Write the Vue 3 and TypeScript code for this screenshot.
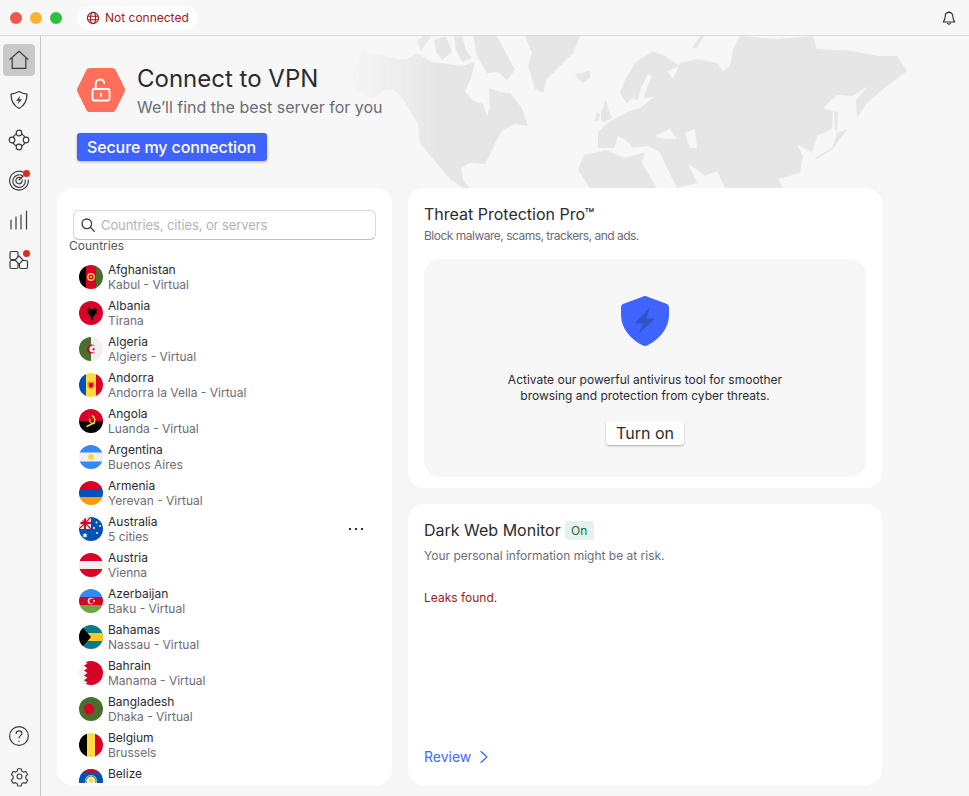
<script setup lang="ts">
interface ICountry {
  code: string
  name: string
  sub: string
  more?: boolean
}

const countries: ICountry[] = [
  { code: 'af', name: 'Afghanistan', sub: 'Kabul - Virtual' },
  { code: 'al', name: 'Albania', sub: 'Tirana' },
  { code: 'dz', name: 'Algeria', sub: 'Algiers - Virtual' },
  { code: 'ad', name: 'Andorra', sub: 'Andorra la Vella - Virtual' },
  { code: 'ao', name: 'Angola', sub: 'Luanda - Virtual' },
  { code: 'ar', name: 'Argentina', sub: 'Buenos Aires' },
  { code: 'am', name: 'Armenia', sub: 'Yerevan - Virtual' },
  { code: 'au', name: 'Australia', sub: '5 cities', more: true },
  { code: 'at', name: 'Austria', sub: 'Vienna' },
  { code: 'az', name: 'Azerbaijan', sub: 'Baku - Virtual' },
  { code: 'bs', name: 'Bahamas', sub: 'Nassau - Virtual' },
  { code: 'bh', name: 'Bahrain', sub: 'Manama - Virtual' },
  { code: 'bd', name: 'Bangladesh', sub: 'Dhaka - Virtual' },
  { code: 'be', name: 'Belgium', sub: 'Brussels' },
  { code: 'bz', name: 'Belize', sub: 'Belmopan - Virtual' },
]
</script>

<template>
  <div class="app">
    <header class="titlebar">
      <div class="lights">
        <span class="light light--red"></span>
        <span class="light light--yellow"></span>
        <span class="light light--green"></span>
      </div>
      <div class="status">
        <svg width="14" height="14" viewBox="0 0 14 14" fill="none" stroke="#9b1c17" stroke-width="1.1">
          <circle cx="7" cy="7" r="5.6" />
          <ellipse cx="7" cy="7" rx="2.6" ry="5.6" />
          <path d="M1.6 5.2h10.8M1.6 8.8h10.8" />
        </svg>
        <span>Not connected</span>
      </div>
      <svg class="bell" width="16" height="16" viewBox="0 0 16 16" fill="none" stroke="#2b2b30" stroke-width="1.1">
        <path d="M8 1.2v1.2M8 2.4c-2.6 0-3.9 1.900-3.900 4.300 0 2.600-.6 3.800-1.900 5.300h11.600c-1.300-1.500-1.900-2.700-1.900-5.300 0-2.400-1.300-4.300-3.900-4.300z" stroke-linejoin="round" />
        <path d="M6.400 13.600c.4.700 2.800.700 3.200 0" stroke-linecap="round" />
      </svg>
    </header>

    <div class="window">
      <nav class="sidebar">
        <div class="nav-group">
          <button class="nav-btn nav-btn--active" type="button">
            <svg width="24" height="24" viewBox="0 0 24 24" fill="none" stroke="#3c3c42" stroke-width="1.2" stroke-linejoin="round">
              <path d="M2.600 11.600 12 3.200l9.400 8.400M5.200 9.600V20.400h13.600V9.600" />
            </svg>
          </button>
          <button class="nav-btn" type="button">
            <svg width="24" height="24" viewBox="0 0 24 24" fill="none" stroke="#3c3c42" stroke-width="1.3" stroke-linejoin="round">
              <path d="M12 3.500c2.700 1.500 5.200 2.300 8 2.600 0 6.800-2.400 11.600-8 14.400-5.600-2.800-8-7.600-8-14.400 2.800-.3 5.300-1.100 8-2.600z" />
              <path d="M13.200 7.800 9 12.800h2.800l-1 3.400 4.200-5h-2.800z" fill="#3c3c42" stroke="none" />
            </svg>
          </button>
          <button class="nav-btn" type="button">
            <svg width="24" height="24" viewBox="0 0 24 24" fill="none" stroke="#3c3c42" stroke-width="1.2">
              <circle cx="12" cy="12" r="6.500" />
              <circle cx="12" cy="5" r="2.800" fill="#f7f7f7" />
              <circle cx="12" cy="19" r="2.800" fill="#f7f7f7" />
              <circle cx="5" cy="12" r="2.800" fill="#f7f7f7" />
              <circle cx="19" cy="12" r="2.800" fill="#f7f7f7" />
            </svg>
          </button>
          <button class="nav-btn" type="button">
            <svg width="24" height="24" viewBox="0 0 24 24" fill="none" stroke="#3c3c42" stroke-width="1.2" stroke-linecap="round">
              <path d="M18 5.400A9.400 9.400 0 1 0 21.400 12" />
              <path d="M15.800 8A6.300 6.300 0 1 0 18.300 12" />
              <path d="M14.200 10.200A3.200 3.200 0 1 0 15.200 12" />
              <path d="M12 12l4-4" />
            </svg>
            <span class="dot"></span>
          </button>
          <button class="nav-btn" type="button">
            <svg width="24" height="24" viewBox="0 0 24 24" fill="none" stroke="#3c3c42" stroke-width="1.2" stroke-linecap="round">
              <path d="M4 21v-9M9 21V9M14 21V7M19.500 21V3" />
            </svg>
          </button>
          <button class="nav-btn" type="button">
            <svg width="24" height="24" viewBox="0 0 24 24" fill="none" stroke="#3c3c42" stroke-width="1.2">
              <rect x="3" y="3.500" width="8" height="8" rx="1.500" />
              <rect x="3" y="12.500" width="8" height="8" rx="1.500" />
              <rect x="12.500" y="12.500" width="8" height="8" rx="1.500" />
              <path d="M12 7.800 16 12 12 16.200 8 12z" fill="#f7f7f7" />
            </svg>
            <span class="dot"></span>
          </button>
        </div>
        <div class="nav-group">
          <button class="nav-btn" type="button">
            <svg width="24" height="24" viewBox="0 0 24 24" fill="none" stroke="#3c3c42" stroke-width="1.2" stroke-linecap="round">
              <circle cx="12" cy="12" r="9.400" />
              <path d="M9.200 9.600c0-1.700 1.300-2.800 2.900-2.800s2.800 1.100 2.800 2.500c0 2.300-2.900 2.300-2.900 4.700" />
              <path d="M12 17v.4" />
            </svg>
          </button>
          <button class="nav-btn" type="button">
            <svg width="21" height="21" viewBox="0 0 24 24" fill="none" stroke="#3c3c42" stroke-width="1.3" stroke-linejoin="round">
              <path d="M10 3.200h4l.7 2.700 1.900 1.100 2.700-.8 2 3.500-2 1.900v2.800l2 1.900-2 3.500-2.700-.8-1.900 1.100-.7 2.700h-4l-.7-2.700-1.900-1.100-2.700.8-2-3.500 2-1.900v-2.800l-2-1.900 2-3.500 2.700.8 1.900-1.100z" />
              <circle cx="12" cy="12" r="2.800" />
            </svg>
          </button>
        </div>
      </nav>

      <main class="main">
        <svg class="map" width="928" height="160" viewBox="41 36 928 160" aria-hidden="true">
          <g fill="#e6e6e6">
            <path d="M353 73 362 52 385 56 403 60 418 54 432 62 448 64 462 66 475 62 471 78 465 91 472 100 483 104 487 116 490 108 489 88 500 92 510 93 522 108 528 126 515 124 503 130 497 139 492 150 485 164 470 163 461 168 463 180 470 188 463 188 450 179 433 159 420 143 418 124 403 99 393 89 383 91 373 98 357 93z" />
            <path d="M417 41 424 36 432 36 424 46 421 51zM434 40 446 36 452 52 442 60 436 52zM454 36 462 36 466 50 472 58 462 62 456 50zM473 36 497 36 515 70 507 80 498 72 487 73 477 56z" />
            <path d="M525 36 580 36 573 53 557 69 547 79 543 93 535 89 528 66 532 53z" />
            <path d="M575 74 590 71 590 78 583 83 578 79z" />
            <path d="M601 113 606 99 608 108 612 118 604 122 601 120z" />
            <path d="M594 122 597 112 600 114 599 120z" />
            <path d="M598 132 607 123 627 112 640 108 654 97 644 98 646 90 652 76 648 74 641 88 638 100 632 98 627 103 620 93 625 80 636 62 653 51 665 56 680 66 667 71 673 79 680 63 697 59 717 63 723 71 730 66 733 49 740 36 777 39 813 36 817 49 853 51 877 56 897 56 907 71 887 86 867 103 857 118 856 100 868 86 853 96 837 95 823 108 833 111 832 129 817 136 812 153 797 144 803 156 800 173 778 179 783 188 725 188 717 171 705 176 688 163 697 183 677 188 665 164 660 152 648 146 633 148 626 140 618 136 614 148 598 148z" />
            <path d="M692 48 700 36 704 36 697 48z" />
            <path d="M815 158 832 148 837 133 847 129 833 149 817 159z" />
            <path d="M834 111 838 112 837 131 835 130z" />
            <path d="M590 188 578 170 584 155 606 150 625 158 645 152 642 163 657 188z" />
            <path d="M882 270 885 275 891 274 887 281 882 285z" />
          </g>
          <g fill="#f7f7f7">
            <path d="M655 136 670 129 677 139 663 139z" />
            <path d="M685 133 695 129 697 148 690 148z" />
          </g>
        </svg>

        <section class="hero">
          <div class="hero__top">
            <svg class="hero__icon" width="48" height="44" viewBox="0 0 48 44">
              <path d="M12.600 0h22.800c1.300 0 2.500.7 3.100 1.800l9 18.200c.6 1.200.6 2.700 0 3.900l-9 18.300c-.6 1.100-1.800 1.800-3.100 1.800H12.600c-1.300 0-2.500-.7-3.100-1.800l-9-18.300c-.6-1.200-.6-2.700 0-3.900l9-18.200C10.100.7 11.300 0 12.600 0z" fill="#ff6f59" />
              <g fill="none" stroke="#fff" stroke-width="1.800" stroke-linecap="round">
                <rect x="15.500" y="21" width="17" height="11.500" rx="1.500" />
                <path d="M18.700 21v-5.200c0-2.400 2-4.300 4.300-4.300 2.200 0 3.900 1.400 4.200 3.500" />
                <path d="M24 25.500v2.500" />
              </g>
            </svg>
            <div>
              <h1 class="hero__title">Connect to VPN</h1>
              <p class="hero__sub">We’ll find the best server for you</p>
            </div>
          </div>
          <button class="connect-btn" type="button">Secure my connection</button>
        </section>

        <div class="columns">
          <section class="card list-card">
            <div class="search">
              <svg width="16" height="16" viewBox="0 0 16 16" fill="none" stroke="#3c3c42" stroke-width="1.3" stroke-linecap="round">
                <circle cx="6.800" cy="6.800" r="4.800" />
                <path d="m10.400 10.400 3.800 3.800" />
              </svg>
              <span>Countries, cities, or servers</span>
            </div>
            <div class="list">
              <div class="list__label">Countries</div>
              <div v-for="c in countries" :key="c.code" class="row">
                <svg class="flag" width="24" height="24" viewBox="0 0 24 24">
                  <template v-if="c.code === 'af'">
                    <rect width="7" height="24" fill="#000" />
                    <rect x="7" width="10" height="24" fill="#d80027" />
                    <rect x="17" width="7" height="24" fill="#496e2d" />
                    <circle cx="12" cy="12" r="3.200" fill="none" stroke="#ffda44" stroke-width="1.400" />
                    <circle cx="12" cy="12" r="1.100" fill="#ffda44" />
                  </template>
                  <template v-else-if="c.code === 'al'">
                    <rect width="24" height="24" fill="#d80027" />
                    <path d="M12 6 13 8.500l4-2-.8 2.500 2.300-.5-1.500 2.800 1.500.7-3 1.500.5 1.500-2 .5.300 2-1.300 2.500-1.300-2.500.3-2-2-.5.500-1.500-3-1.500 1.500-.7-1.500-2.800 2.300.5-.8-2.500 4 2z" fill="#000" />
                  </template>
                  <template v-else-if="c.code === 'dz'">
                    <rect width="24" height="24" fill="#f0f0f0" />
                    <rect width="12" height="24" fill="#496e2d" />
                    <circle cx="12.500" cy="12" r="4.500" fill="#d80027" />
                    <circle cx="14" cy="12" r="3.600" fill="#f0f0f0" />
                    <path d="M14.200 10.300l.5 1.200 1.300-.2-.8 1 .8 1-1.300-.2-.5 1.200-.3-1.300-1.200-.4 1.200-.5z" fill="#d80027" />
                  </template>
                  <template v-else-if="c.code === 'ad'">
                    <rect width="7" height="24" fill="#0052b4" />
                    <rect x="7" width="10" height="24" fill="#ffda44" />
                    <rect x="17" width="7" height="24" fill="#d80027" />
                    <path d="M8.500 8.500h7v5.500L12 16.500 8.500 14z" fill="#ff9811" />
                    <path d="M10 10h4v3.500L12 15l-2-1.500z" fill="#d80027" />
                  </template>
                  <template v-else-if="c.code === 'ao'">
                    <rect width="24" height="12" fill="#d80027" />
                    <rect y="12" width="24" height="12" fill="#000" />
                    <path d="M13 6.500c3 1.500 3.800 5.500 1.500 8.500" fill="none" stroke="#ffda44" stroke-width="1.500" />
                    <path d="M7 17l8-4 1 1.200-8 4z" fill="#ffda44" />
                    <path d="M10.500 9.500l1.500 1-1 1.500 3 2.500-1 1-3-3z" fill="#ffda44" />
                  </template>
                  <template v-else-if="c.code === 'ar'">
                    <rect width="24" height="24" fill="#f0f0f0" />
                    <rect width="24" height="7.500" fill="#338af3" />
                    <rect y="16.500" width="24" height="7.500" fill="#338af3" />
                    <circle cx="12" cy="12" r="3" fill="#ffda44" />
                  </template>
                  <template v-else-if="c.code === 'am'">
                    <rect width="24" height="8" fill="#d80027" />
                    <rect y="8" width="24" height="8" fill="#0052b4" />
                    <rect y="16" width="24" height="8" fill="#ff9811" />
                  </template>
                  <template v-else-if="c.code === 'au'">
                    <rect width="24" height="24" fill="#0052b4" />
                    <rect width="12" height="12" fill="#f0f0f0" />
                    <path d="M0 5h12v2H0zM5 0h2v12H5z" fill="#d80027" />
                    <path d="M0 0l12 12M12 0 0 12" stroke="#d80027" stroke-width="1.200" />
                    <path d="M6 15.500l.7 1.700 1.800-.3-1 1.500 1 1.500-1.800-.3L6 21.300l-.7-1.700-1.800.3 1-1.500-1-1.500 1.800.3z" fill="#f0f0f0" />
                    <g fill="#f0f0f0">
                      <circle cx="17.500" cy="5.500" r="1" />
                      <circle cx="21" cy="9" r="1" />
                      <circle cx="15" cy="11" r="1" />
                      <circle cx="18" cy="16" r="1" />
                    </g>
                  </template>
                  <template v-else-if="c.code === 'at'">
                    <rect width="24" height="24" fill="#f0f0f0" />
                    <rect width="24" height="8" fill="#d80027" />
                    <rect y="16" width="24" height="8" fill="#d80027" />
                  </template>
                  <template v-else-if="c.code === 'az'">
                    <rect width="24" height="8" fill="#338af3" />
                    <rect y="8" width="24" height="8" fill="#d80027" />
                    <rect y="16" width="24" height="8" fill="#6da544" />
                    <circle cx="12" cy="12" r="3.300" fill="#f0f0f0" />
                    <circle cx="13" cy="12" r="2.600" fill="#d80027" />
                    <circle cx="15" cy="12" r="1.100" fill="#f0f0f0" />
                  </template>
                  <template v-else-if="c.code === 'bs'">
                    <rect width="24" height="24" fill="#0a7b8a" />
                    <rect y="8" width="24" height="8" fill="#ffc72c" />
                    <path d="M0 0h1.500L12 12 1.500 24H0z" fill="#000" />
                  </template>
                  <template v-else-if="c.code === 'bh'">
                    <rect width="24" height="24" fill="#f0f0f0" />
                    <path d="M5 0h19v24H5l3.500-2.400L5 19.200l3.500-2.400L5 14.400 8.500 12 5 9.600l3.500-2.400L5 4.800l3.500-2.400z" fill="#d80027" />
                  </template>
                  <template v-else-if="c.code === 'bd'">
                    <rect width="24" height="24" fill="#496e2d" />
                    <circle cx="10" cy="12" r="5.200" fill="#d80027" />
                  </template>
                  <template v-else-if="c.code === 'be'">
                    <rect width="8" height="24" fill="#000" />
                    <rect x="8" width="8" height="24" fill="#ffda44" />
                    <rect x="16" width="8" height="24" fill="#d80027" />
                  </template>
                  <template v-else-if="c.code === 'bz'">
                    <rect width="24" height="24" fill="#0052b4" />
                    <rect width="24" height="3.500" fill="#d80027" />
                    <rect y="20.500" width="24" height="3.500" fill="#d80027" />
                    <circle cx="12" cy="12" r="6" fill="#f0f0f0" />
                    <circle cx="12" cy="12" r="5" fill="none" stroke="#6da544" stroke-width="1.400" />
                    <circle cx="12" cy="11.500" r="2.200" fill="#ffda44" />
                  </template>
                </svg>
                <div class="row__text">
                  <div class="row__name">{{ c.name }}</div>
                  <div class="row__sub">{{ c.sub }}</div>
                </div>
                <div v-if="c.more" class="more">
                  <span></span><span></span><span></span>
                </div>
              </div>
            </div>
          </section>

          <div class="stack">
            <section class="card threat">
              <h2 class="card__title">Threat Protection Pro™</h2>
              <p class="threat__sub">Block malware, scams, trackers, and ads.</p>
              <div class="panel">
                <svg width="48" height="50" viewBox="0 0 48 50">
                  <path d="M24 0c.6 0 1.200.1 1.800.4l19 7.100C47 8.300 48 9.700 48 11.500v7.500c0 13.500-10 24.500-21.500 30.300-1.600.8-3.400.8-5 0C10 43.500 0 32.500 0 19v-7.500c0-1.800 1-3.200 3.200-4L22.200.4C22.800.1 23.400 0 24 0z" fill="#3e63ff" />
                  <path d="M29 11 13.500 27.500h8.500L17.500 38 34 22.500h-8.500z" fill="#2f54c8" />
                </svg>
                <p class="panel__text">Activate our powerful antivirus tool for smoother<br />browsing and protection from cyber threats.</p>
                <button class="turn-on" type="button">Turn on</button>
              </div>
            </section>

            <section class="card monitor">
              <div class="monitor__head">
                <h2 class="card__title">Dark Web Monitor</h2>
                <span class="badge">On</span>
              </div>
              <p class="monitor__sub">Your personal information might be at risk.</p>
              <p class="monitor__leaks">Leaks found.</p>
              <a class="review">
                Review
                <svg width="10" height="14" viewBox="0 0 10 14" fill="none" stroke="#3e63ff" stroke-width="1.200" stroke-linecap="round" stroke-linejoin="round">
                  <path d="m2 1.500 6 5.500-6 5.500" />
                </svg>
              </a>
            </section>
          </div>
        </div>
      </main>
    </div>
  </div>
</template>

<style>
html,
body {
  margin: 0;
  background: #f7f7f7;
}
</style>

<style scoped>
.app {
  width: 969px;
  height: 796px;
  display: flex;
  flex-direction: column;
  overflow: hidden;
  background: #f7f7f7;
  font-family: Inter, "Noto Sans", sans-serif;
  color: #2b2b30;
}

/* barra de titulo */
.titlebar {
  height: 35px;
  flex: none;
  display: flex;
  align-items: center;
  border-bottom: 1px solid #dedede;
  padding: 0 12px 0 10px;
}
.lights {
  display: flex;
  gap: 8px;
}
.light {
  width: 12px;
  height: 12px;
  border-radius: 50%;
}
.light--red { background: #f0564e; }
.light--yellow { background: #f8b42c; }
.light--green { background: #2dc13f; }
.status {
  margin-left: 15px;
  height: 24px;
  width: 120px;
  box-sizing: border-box;
  padding-left: 9px;
  display: flex;
  align-items: center;
  gap: 5px;
  background: #fff;
  border-radius: 12px;
  font-size: 12px;
  color: #9b1c17;
}
.bell {
  margin-left: auto;
}

.window {
  flex: 1;
  display: flex;
  min-height: 0;
}

/* sidebar */
.sidebar {
  flex: none;
  box-sizing: border-box;
  border-right: 1px solid #c9c9c9;
  width: 41px;
  padding: 8px 5px 4px 3px;
  display: flex;
  flex-direction: column;
  justify-content: space-between;
}
.nav-group {
  display: flex;
  flex-direction: column;
  gap: 8px;
}
.nav-btn {
  position: relative;
  width: 32px;
  height: 32px;
  padding: 0;
  border: 0;
  border-radius: 4px;
  background: none;
  display: flex;
  align-items: center;
  justify-content: center;
}
.nav-btn--active {
  background: #c9c9c9;
}
.dot {
  position: absolute;
  top: 6px;
  right: 5px;
  width: 7px;
  height: 7px;
  border-radius: 50%;
  background: #e8291c;
}

/* contenido */
.main {
  position: relative;
  flex: 1;
  min-width: 0;
  padding-left: 16px;
}
.map {
  position: absolute;
  top: 0;
  left: 0;
  -webkit-mask-image: linear-gradient(to right, transparent 304px, #000 395px);
  mask-image: linear-gradient(to right, transparent 304px, #000 395px);
}
.hero {
  position: relative;
  height: 152px;
  box-sizing: border-box;
  padding: 32px 0 0 20px;
}
.hero__top {
  display: flex;
  gap: 12px;
}
.hero__icon {
  flex: none;
}
.hero__title {
  margin: -5px 0 0;
  font-size: 24px;
  line-height: 32px;
  font-weight: 400;
  color: #2b2b30;
}
.hero__sub {
  margin: 0;
  font-size: 16px;
  line-height: 24px;
  color: #6c6c75;
}
.connect-btn {
  display: block;
  margin-top: 14px;
  width: 190px;
  height: 28px;
  padding: 0 1px 0 0;
  border: 0;
  border-radius: 3px;
  background: #3e63ff;
  color: #fff;
  font-family: inherit;
  font-size: 16px;
  font-weight: 500;
  letter-spacing: -0.1px;
  box-shadow: 0 1px 3px rgba(0, 0, 0, 0.25);
}

.columns {
  position: relative;
  display: flex;
  gap: 16px;
}
.card {
  background: #fff;
  border-radius: 16px;
  box-sizing: border-box;
}
.list-card {
  width: 335px;
  height: 597px;
  display: flex;
  flex-direction: column;
  padding: 22px 0 2px;
  overflow: hidden;
}
.search {
  flex: none;
  margin: 0 16px;
  height: 30px;
  box-sizing: border-box;
  border: 1px solid #d6d6d6;
  border-bottom-color: #bdbdbd;
  border-radius: 6px;
  display: flex;
  align-items: center;
  gap: 5px;
  padding-left: 6px;
  font-size: 13px;
  letter-spacing: -0.1px;
  color: #b3b3b8;
}
.list {
  flex: 1;
  min-height: 0;
  overflow: hidden;
  padding-top: 1px;
}
.list__label {
  margin: -3px 0 5px 12px;
  font-size: 12px;
  line-height: 16px;
  color: #55555c;
}
.row {
  height: 36px;
  box-sizing: border-box;
  display: flex;
  align-items: center;
  padding: 0 29px 0 22px;
  gap: 5px;
}
.flag {
  flex: none;
  border-radius: 50%;
}
.row__text {
  flex: 1;
}
.row__name {
  font-size: 12px;
  line-height: 15px;
  color: #2b2b30;
}
.row__sub {
  font-size: 12px;
  line-height: 15px;
  color: #6c6c75;
}
.more {
  display: flex;
  gap: 4px;
}
.more span {
  width: 2px;
  height: 2px;
  background: #2b2b30;
}

.stack {
  width: 474px;
  display: flex;
  flex-direction: column;
  gap: 16px;
}
.card__title {
  margin: 0;
  font-size: 16px;
  line-height: 20px;
  font-weight: 400;
  color: #2b2b30;
}
.threat {
  height: 300px;
  padding: 16px;
}
.threat__sub {
  margin: 3px 0 0;
  font-size: 12px;
  line-height: 18px;
  letter-spacing: -0.5px;
  color: #6c6c75;
}
.panel {
  margin-top: 14px;
  height: 218px;
  box-sizing: border-box;
  padding-top: 37px;
  background: #f7f7f7;
  border-radius: 16px;
  display: flex;
  flex-direction: column;
  align-items: center;
}
.panel__text {
  margin: 26px 0 0;
  text-align: center;
  font-size: 12px;
  line-height: 16px;
  color: #2b2b30;
}
.turn-on {
  margin-top: 17px;
  width: 78px;
  height: 24px;
  padding: 0;
  border: 0;
  border-radius: 3px;
  background: #fff;
  color: #2b2b30;
  font-family: inherit;
  font-size: 16px;
  box-shadow: 0 1px 2px rgba(0, 0, 0, 0.3);
}
.monitor {
  height: 281px;
  padding: 16px;
  display: flex;
  flex-direction: column;
}
.monitor__head {
  display: flex;
  align-items: center;
  gap: 4px;
}
.badge {
  width: 29px;
  height: 19px;
  line-height: 19px;
  text-align: center;
  border-radius: 3px;
  background: #e5f2ec;
  color: #0c6b3f;
  font-size: 12px;
}
.monitor__sub {
  margin: 8px 0 0;
  font-size: 12px;
  line-height: 16px;
  color: #6c6c75;
}
.monitor__leaks {
  margin: 26px 0 0;
  font-size: 12px;
  line-height: 16px;
  color: #9b1c17;
}
.review {
  margin-top: auto;
  margin-bottom: 2px;
  display: flex;
  align-items: center;
  gap: 8px;
  font-size: 14px;
  line-height: 20px;
  color: #4766ff;
}
</style>
